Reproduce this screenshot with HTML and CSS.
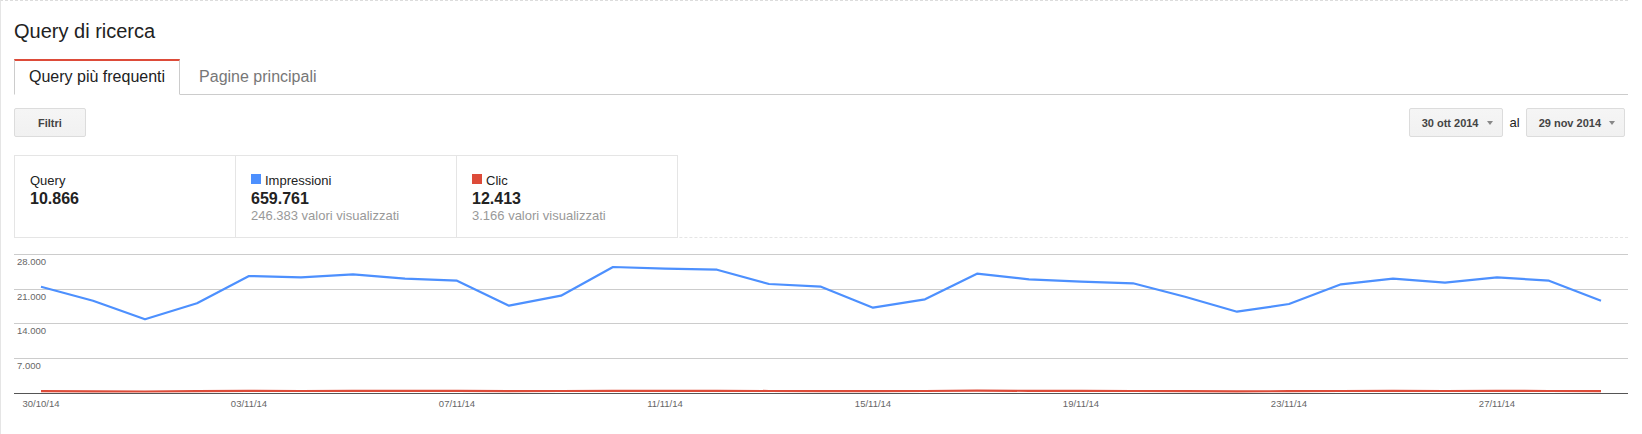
FILE: index.html
```html
<!DOCTYPE html>
<html lang="it">
<head>
<meta charset="utf-8">
<title>Query di ricerca</title>
<link rel="stylesheet" href="styles.css">
</head>
<body>
<div class="page">
  <h1 class="title">Query di ricerca</h1>
  <div class="tabs">
    <div class="tab tab-active">Query più frequenti</div>
    <div class="tab">Pagine principali</div>
  </div>
  <div class="toolbar">
    <div class="btn btn-filter">Filtri</div>
    <div class="dates">
      <div class="btn btn-date">30 ott 2014<span class="caret"></span></div>
      <span class="al">al</span>
      <div class="btn btn-date">29 nov 2014<span class="caret"></span></div>
    </div>
  </div>
  <div class="stats-wrap">
    <div class="stats">
      <div class="stat">
        <div class="label">Query</div>
        <div class="value">10.866</div>
      </div>
      <div class="stat">
        <div class="label"><span class="swatch swatch-blue"></span>Impressioni</div>
        <div class="value">659.761</div>
        <div class="sub">246.383 valori visualizzati</div>
      </div>
      <div class="stat">
        <div class="label"><span class="swatch swatch-red"></span>Clic</div>
        <div class="value">12.413</div>
        <div class="sub">3.166 valori visualizzati</div>
      </div>
    </div>
  </div>
  <svg class="chart" width="1614" height="180" viewBox="0 0 1614 180">
    <g class="grid">
      <line x1="0" y1="16.5" x2="1614" y2="16.5"/>
      <line x1="0" y1="51.5" x2="1614" y2="51.5"/>
      <line x1="0" y1="85.5" x2="1614" y2="85.5"/>
      <line x1="0" y1="120.5" x2="1614" y2="120.5"/>
    </g>
    <line class="axis" x1="0" y1="155.5" x2="1614" y2="155.5"/>
    <g class="ylabels">
      <text x="3" y="27">28.000</text>
      <text x="3" y="62">21.000</text>
      <text x="3" y="96">14.000</text>
      <text x="3" y="131">7.000</text>
    </g>
    <polyline class="line-blue" points="27,48.7 79,62.7 131,81.3 183,65.3 235,38 287,39.3 339,36.3 391,40.7 443,42.7 495,67.7 547,57.7 599,29 651,30.7 703,31.7 755,46 807,48.7 859,69.7 911,61.3 963,35.7 1015,41.3 1067,43.7 1119,45.3 1171,58.7 1223,73.7 1275,66 1327,46.3 1379,40.7 1431,44.7 1483,39.3 1535,42.7 1587,62.7"/>
    <polyline class="line-red" points="27,153.2 79,153.4 131,153.5 183,153.2 235,152.9 287,153 339,152.9 391,152.8 443,152.9 495,153.1 547,153 599,152.8 651,152.8 703,152.8 755,153 807,153.1 859,153.2 911,153 963,152.7 1015,152.8 1067,152.9 1119,153 1171,153.1 1223,153.3 1275,153.2 1327,153 1379,152.9 1431,153 1483,152.9 1535,153 1587,153.2"/>
    <g class="xlabels">
      <text x="27" y="169">30/10/14</text>
      <text x="235" y="169">03/11/14</text>
      <text x="443" y="169">07/11/14</text>
      <text x="651" y="169">11/11/14</text>
      <text x="859" y="169">15/11/14</text>
      <text x="1067" y="169">19/11/14</text>
      <text x="1275" y="169">23/11/14</text>
      <text x="1483" y="169">27/11/14</text>
    </g>
  </svg>
</div>
</body>
</html>
```
FILE: styles.css
```css
* { box-sizing: border-box; }

body {
  margin: 0;
  background: #fff;
  color: #222;
  font-family: "Liberation Sans", Arial, sans-serif;
}

.page {
  width: 1628px;
  height: 434px;
  padding: 18px 0 0 13px;
  border-left: 1px solid #e5e5e5;
  border-top: 1px dashed #dcdcdc;
  overflow: hidden;
}

.title {
  margin: 0;
  font-size: 20px;
  line-height: 24px;
  font-weight: normal;
  color: #222;
}

.tabs {
  display: flex;
  margin-top: 16px;
  border-bottom: 1px solid #ccc;
}

.tab {
  font-size: 16px;
  line-height: 20px;
  padding: 6px 14px 7px;
  border: 1px solid transparent;
  border-top: 2px solid transparent;
  margin-bottom: -1px;
  color: #777;
  white-space: nowrap;
}

.tab + .tab { margin-left: 4px; }

.tab-active {
  color: #222;
  background: #fff;
  border-color: #ccc;
  border-top-color: #dd4b39;
  border-bottom-color: #fff;
}

.toolbar {
  display: flex;
  justify-content: space-between;
  align-items: center;
  margin-top: 13px;
  padding-right: 3px;
}

.dates {
  display: flex;
  align-items: center;
}

.btn {
  height: 29px;
  display: inline-flex;
  align-items: center;
  border: 1px solid #dcdcdc;
  border-radius: 2px;
  background: linear-gradient(#f5f5f5, #f1f1f1);
  font-size: 11px;
  font-weight: bold;
  color: #444;
  white-space: nowrap;
}

.btn-filter { padding: 0 23px; }

.btn-date { padding: 0 9px 0 12px; }

.caret {
  display: inline-block;
  margin-left: 8px;
  width: 0;
  height: 0;
  border-left: 3px solid transparent;
  border-right: 3px solid transparent;
  border-top: 4px solid #888;
}

.al {
  font-size: 13px;
  color: #222;
  margin: 0 6px 0 7px;
}

.stats-wrap {
  margin-top: 18px;
  border-bottom: 1px dashed #e5e5e5;
}

.stats {
  display: flex;
  width: 664px;
  border: 1px solid #e5e5e5;
  border-right: 0;
  margin-bottom: -1px;
}

.stat {
  width: 221px;
  border-right: 1px solid #e5e5e5;
  padding: 17px 15px 13px;
}

.label {
  font-size: 13px;
  line-height: 16px;
  color: #222;
}

.value {
  font-size: 16px;
  line-height: 19px;
  font-weight: bold;
  color: #222;
}

.sub {
  font-size: 13px;
  line-height: 16px;
  color: #999;
}

.swatch {
  display: inline-block;
  width: 10px;
  height: 10px;
  margin-right: 4px;
  vertical-align: 1px;
}

.swatch-blue { background: #4d90fe; }
.swatch-red { background: #dd4b39; }

.chart { display: block; }

.grid line {
  stroke: #ccc;
  stroke-width: 1;
}

.axis {
  stroke: #555;
  stroke-width: 1;
}

.ylabels text,
.xlabels text {
  font-family: "Liberation Sans", Arial, sans-serif;
  font-size: 9.5px;
  fill: #666;
}

.xlabels text { text-anchor: middle; }

.line-blue {
  fill: none;
  stroke: #4d90fe;
  stroke-width: 2.2;
  stroke-linejoin: round;
}

.line-red {
  fill: none;
  stroke: #dd4b39;
  stroke-width: 2.2;
}
```
